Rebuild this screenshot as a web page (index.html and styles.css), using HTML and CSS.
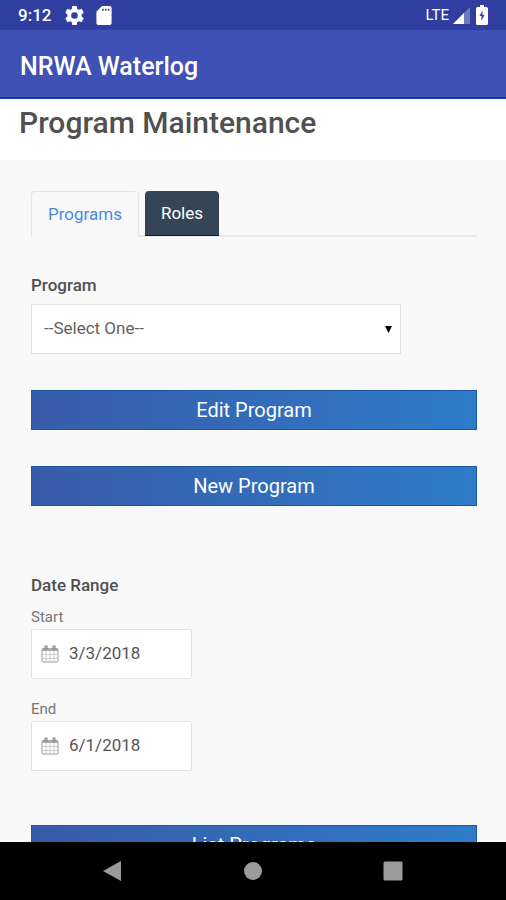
FILE: index.html
```html
<!DOCTYPE html>
<html lang="en">
<head>
<meta charset="utf-8">
<meta name="viewport" content="width=device-width, initial-scale=1">
<title>NRWA Waterlog</title>
<link rel="stylesheet" href="styles.css">
</head>
<body>
<div class="status">
  <span class="clock">9:12</span>
  <svg class="gear" viewBox="2 2 20 20" aria-hidden="true"><path d="M19.43 12.98c.04-.32.07-.64.07-.98s-.03-.66-.07-.98l2.11-1.65c.19-.15.24-.42.12-.64l-2-3.46c-.12-.22-.39-.3-.61-.22l-2.49 1c-.52-.4-1.08-.73-1.69-.98l-.38-2.65C14.46 2.18 14.25 2 14 2h-4c-.25 0-.46.18-.49.42l-.38 2.65c-.61.25-1.17.59-1.69.98l-2.49-1c-.23-.09-.49 0-.61.22l-2 3.46c-.13.22-.07.49.12.64l2.11 1.65c-.04.32-.07.65-.07.98s.03.66.07.98l-2.11 1.65c-.19.15-.24.42-.12.64l2 3.46c.12.22.39.3.61.22l2.49-1c.52.4 1.08.73 1.69.98l.38 2.65c.03.24.24.42.49.42h4c.25 0 .46-.18.49-.42l.38-2.65c.61-.25 1.17-.59 1.69-.98l2.49 1c.23.09.49 0 .61-.22l2-3.46c.12-.22.07-.49-.12-.64zM12 15.5a3.5 3.5 0 1 1 0-7 3.5 3.5 0 0 1 0 7z"/></svg>
  <svg class="card" viewBox="0 0 16 20" aria-hidden="true"><path d="M6 0h8a2 2 0 0 1 2 2v16a2 2 0 0 1-2 2H2a2 2 0 0 1-2-2V6z"/><path class="slots" d="M6 3h1.600v2H6zM9 3h1.600v2H9zM12 3h1.600v2H12z"/></svg>
  <span class="network">LTE</span>
  <svg class="signal" viewBox="0 0 17 17" aria-hidden="true"><path class="weak" d="M17 0v17H0z"/><path d="M11 6v11H0z"/></svg>
  <svg class="battery" viewBox="0 0 12 20" aria-hidden="true"><path d="M4 0h4v2h2.500A1.500 1.500 0 0 1 12 3.500v15a1.500 1.500 0 0 1-1.500 1.500h-9A1.500 1.500 0 0 1 0 18.500v-15A1.500 1.500 0 0 1 1.500 2H4z"/><path class="bolt" d="M6.500 5.500v4.500h2L5.500 15.500v-4.500h-2z"/></svg>
</div>
<header class="appbar">NRWA Waterlog</header>
<main class="page">
  <h1 class="title">Program Maintenance</h1>
  <div class="content">
    <nav class="tabs">
      <a class="tab active" href="#programs">Programs</a>
      <a class="tab" href="#roles">Roles</a>
    </nav>
    <label class="heading" for="program">Program</label>
    <div class="picker">
      <select id="program"><option>--Select One--</option></select>
      <svg class="arrow" viewBox="0 0 7 7" aria-hidden="true"><path d="M0 0h7L3.500 7z"/></svg>
    </div>
    <button class="action" type="button">Edit Program</button>
    <button class="action" type="button">New Program</button>
    <fieldset class="range">
      <legend class="heading">Date Range</legend>
      <label class="small" for="start">Start</label>
      <div class="date">
        <svg class="calendar" viewBox="0 0 18 18" aria-hidden="true"><path class="frame" d="M1 4.500h16V16q0 1-1 1H2q-1 0-1-1z"/><path class="band" d="M1 3h16v3H1z"/><path class="grid" d="M1 9.500h16M1 13.500h16M5 6v11M9 6v11M13 6v11"/><path class="ring" d="M4 1h2v3H4zM12 1h2v3h-2z"/></svg>
        <input id="start" type="text" value="3/3/2018">
      </div>
      <label class="small" for="end">End</label>
      <div class="date">
        <svg class="calendar" viewBox="0 0 18 18" aria-hidden="true"><path class="frame" d="M1 4.500h16V16q0 1-1 1H2q-1 0-1-1z"/><path class="band" d="M1 3h16v3H1z"/><path class="grid" d="M1 9.500h16M1 13.500h16M5 6v11M9 6v11M13 6v11"/><path class="ring" d="M4 1h2v3H4zM12 1h2v3h-2z"/></svg>
        <input id="end" type="text" value="6/1/2018">
      </div>
    </fieldset>
    <button class="action" type="button">List Programs</button>
  </div>
</main>
<footer class="system">
  <button type="button" aria-label="Back"><svg viewBox="0 0 20 20"><path d="M18 0v20L0 10z"/></svg></button>
  <button type="button" aria-label="Home"><svg viewBox="0 0 20 20"><circle cx="10" cy="10" r="9"/></svg></button>
  <button type="button" aria-label="Overview"><svg viewBox="0 0 20 20"><rect x="0.500" y="0.500" width="19" height="19" rx="1.500"/></svg></button>
</footer>
</body>
</html>
```
FILE: styles.css
```css
* {
  box-sizing: border-box;
}

body {
  margin: 0;
  height: 100vh;
  display: flex;
  flex-direction: column;
  overflow: hidden;
  background: #f9f9f9;
  color: #505050;
  font-family: Roboto, "Liberation Sans", sans-serif;
  font-size: 17px;
}

.status {
  flex: none;
  display: flex;
  align-items: center;
  height: 30px;
  padding: 0 18px;
  background: #303f9f;
  color: #fff;
  fill: #fff;
}

.clock {
  font-size: 17px;
  font-weight: 500;
  margin-right: 14px;
}

.gear {
  width: 19px;
  height: 19px;
  margin-right: 12px;
}

.card {
  width: 16px;
  height: 19px;
}

.slots,
.bolt {
  fill: #303f9f;
}

.network {
  margin-left: auto;
  margin-right: 4px;
  font-size: 15px;
}

.signal {
  width: 17px;
  height: 17px;
  margin-right: 6px;
}

.weak {
  opacity: 0.3;
}

.battery {
  width: 12px;
  height: 20px;
}

.appbar {
  flex: none;
  display: flex;
  align-items: center;
  height: 69px;
  padding: 6px 20px 0;
  background: #3f51b5;
  border-bottom: 2px solid #1c36a4;
  color: #fff;
  font-size: 25px;
  font-weight: 500;
}

.page {
  flex: 1;
  min-height: 0;
  overflow: hidden;
}

.title {
  margin: 0;
  height: 61px;
  padding: 6px 19px 0;
  background: #fff;
  font-size: 30px;
  line-height: 36px;
  font-weight: 500;
}

.content {
  padding: 31px 29px 0 31px;
}

.tabs {
  display: flex;
  gap: 6px;
  height: 46px;
  margin-bottom: 36px;
  border-bottom: 2px solid #e9eaeb;
}

.tab {
  height: 45px;
  padding: 0 16px;
  border-radius: 4px 4px 0 0;
  background: #354556;
  border-bottom: 1px solid #11164f;
  color: #fff;
  font-size: 17px;
  line-height: 44px;
  text-decoration: none;
}

.tab.active {
  height: 46px;
  background: #f9f9f9;
  border: 1px solid #e6e7e8;
  border-bottom: 0;
  color: #4a89dc;
}

.heading {
  display: block;
  padding: 0;
  font-size: 17px;
  line-height: 24px;
  font-weight: 500;
}

.picker {
  display: flex;
  align-items: center;
  max-width: 370px;
  height: 50px;
  margin: 7px 0 36px;
  padding-right: 8px;
  background: #fff;
  border: 1px solid #e0e2e3;
}

.picker select {
  flex: 1;
  height: 100%;
  padding: 0 12px 2px;
  appearance: none;
  border: 0;
  background: none;
  color: #626262;
  font: inherit;
}

.arrow {
  width: 7px;
  height: 7px;
  fill: #000;
}

.action {
  display: block;
  width: 100%;
  height: 40px;
  margin: 0 0 36px;
  padding: 0;
  border: 1px solid #1b58a2;
  background: linear-gradient(90deg, #385ba9, #2f7cc9);
  color: #fff;
  font: inherit;
  font-size: 20px;
}

.range {
  margin: 67px 0 36px;
  padding: 0;
  border: 0;
}

.small {
  display: block;
  margin-top: 8px;
  color: #777;
  font-size: 15px;
  line-height: 24px;
}

.date {
  display: flex;
  align-items: center;
  width: 161px;
  height: 50px;
  margin-bottom: 18px;
  padding-left: 9px;
  background: #fff;
  border: 1px solid #e0e2e3;
  border-radius: 2px;
}

.date input {
  flex: 1;
  min-width: 0;
  height: 100%;
  padding: 0 10px 2px;
  border: 0;
  background: none;
  color: #555;
  font: inherit;
}

.calendar {
  width: 18px;
  height: 18px;
  fill: none;
  stroke: #999;
}

.calendar .band {
  fill: #aaa;
  stroke: none;
}

.calendar .grid {
  stroke: #ccc;
}

.calendar .ring {
  fill: #eee;
  stroke: #777;
}

.system {
  flex: none;
  display: flex;
  justify-content: center;
  gap: 120px;
  height: 58px;
  background: #000;
}

.system button {
  display: flex;
  align-items: center;
  padding: 0;
  border: 0;
  background: none;
}

.system svg {
  width: 20px;
  height: 20px;
  fill: #9b9b9b;
}
```
